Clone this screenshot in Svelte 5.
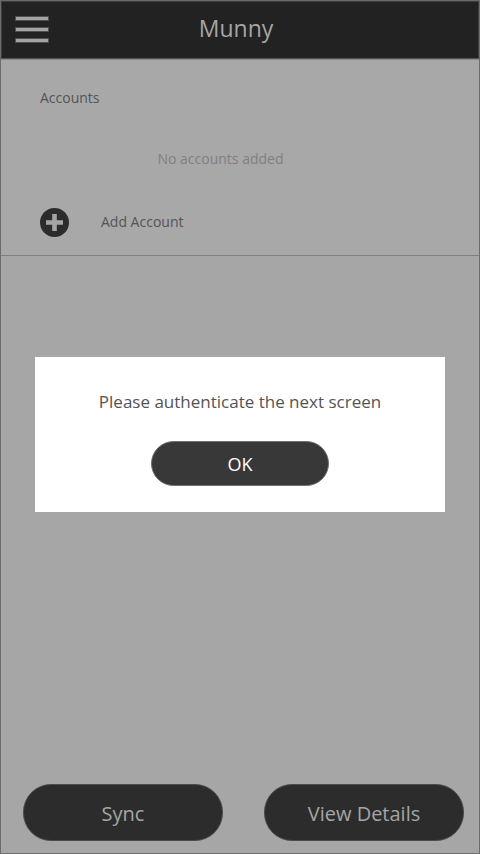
<script>
  let dialogOpen = $state(true);
</script>

<main class="screen">
  <header>
    <button class="menu" aria-label="Open menu">
      <svg width="36" height="30" viewBox="0 0 36 30" aria-hidden="true">
        {#each [2, 13, 24] as y}
          <rect x="1" y={y - 1} width="34" height="5" fill="#505050" />
          <rect x="2" {y} width="32" height="3" fill="#a3a3a3" />
        {/each}
      </svg>
    </button>
    <h1>Munny</h1>
  </header>

  <section class="accounts">
    <h2>Accounts</h2>
    <p class="empty">No accounts added</p>
    <button class="add">
      <svg width="30" height="30" viewBox="0 0 30 30" aria-hidden="true">
        <circle cx="14.5" cy="14.5" r="14.5" fill="#2c2c2c" />
        <path d="M12.2 6h4.6v6.2H23v4.6h-6.2V23h-4.6v-6.2H6v-4.6h6.2z" fill="#a5a5a5" />
      </svg>
      <span>Add Account</span>
    </button>
  </section>

  <footer>
    <button>Sync</button>
    <button>View Details</button>
  </footer>

  {#if dialogOpen}
    <div class="overlay">
      <div class="dialog" role="dialog" aria-modal="true" aria-labelledby="message">
        <p id="message">Please authenticate the next screen</p>
        <button onclick={() => (dialogOpen = false)}>OK</button>
      </div>
    </div>
  {/if}
</main>

<style>
  :global(body) {
    background: #a6a6a6;
  }
  .screen {
    position: relative;
    box-sizing: border-box;
    min-height: 100vh;
    display: flex;
    flex-direction: column;
    border: 1px solid #6c6c6c;
    background: #a6a6a6;
    color: #545454;
    font-family: "Open Sans", "Noto Sans", sans-serif;
    font-size: 14px;
    line-height: 20px;
  }
  h1, h2, p {
    margin: 0;
    font-weight: 400;
  }
  button {
    box-sizing: border-box;
    margin: 0;
    padding: 0;
    border: 0;
    background: none;
    color: inherit;
    font: inherit;
    cursor: pointer;
  }
  svg {
    display: block;
  }
  header {
    box-sizing: border-box;
    height: 58px;
    padding: 0 20px 0 12px;
    display: grid;
    grid-template-columns: 36px 1fr 36px;
    align-items: center;
    border: 1px solid #3c3c3c;
    border-bottom-color: #555;
    background: #222;
  }
  h1 {
    padding-bottom: 4px;
    color: #a5a5a5;
    font-size: 23px;
    line-height: 30px;
    text-align: center;
  }
  .accounts {
    padding: 28px 40px 17px 39px;
    border-top: 1px solid #8a8a8a;
    border-bottom: 1px solid #808080;
    background: #a8a8a8;
  }
  h2 {
    font-size: 14px;
  }
  .empty {
    padding: 41px 38px 39px 0;
    color: #808080;
    text-align: center;
  }
  .add {
    display: flex;
    align-items: center;
    gap: 31px;
  }
  .add span {
    padding-bottom: 2px;
  }
  footer {
    margin-top: auto;
    padding: 0 15px 12px 22px;
    display: flex;
    gap: 41px;
  }
  footer button {
    flex: 1;
    height: 57px;
    padding-top: 2px;
    border: 1px solid #4c4c4c;
    border-radius: 28px;
    background: #2c2c2c;
    color: #a5a5a5;
    font-size: 20px;
  }
  .overlay {
    position: absolute;
    inset: 0;
    padding: 14px 34px 0;
    display: flex;
    align-items: center;
  }
  .dialog {
    flex: 1;
    padding: 31px 0 26px;
    display: flex;
    flex-direction: column;
    align-items: center;
    gap: 25px;
    background: #fff;
  }
  .dialog p {
    font-size: 17px;
    line-height: 28px;
  }
  .dialog button {
    width: 178px;
    height: 45px;
    padding-top: 2px;
    border: 1px solid #707070;
    border-radius: 23px;
    background: #383838;
    color: #fff;
    font-size: 18px;
  }
</style>
